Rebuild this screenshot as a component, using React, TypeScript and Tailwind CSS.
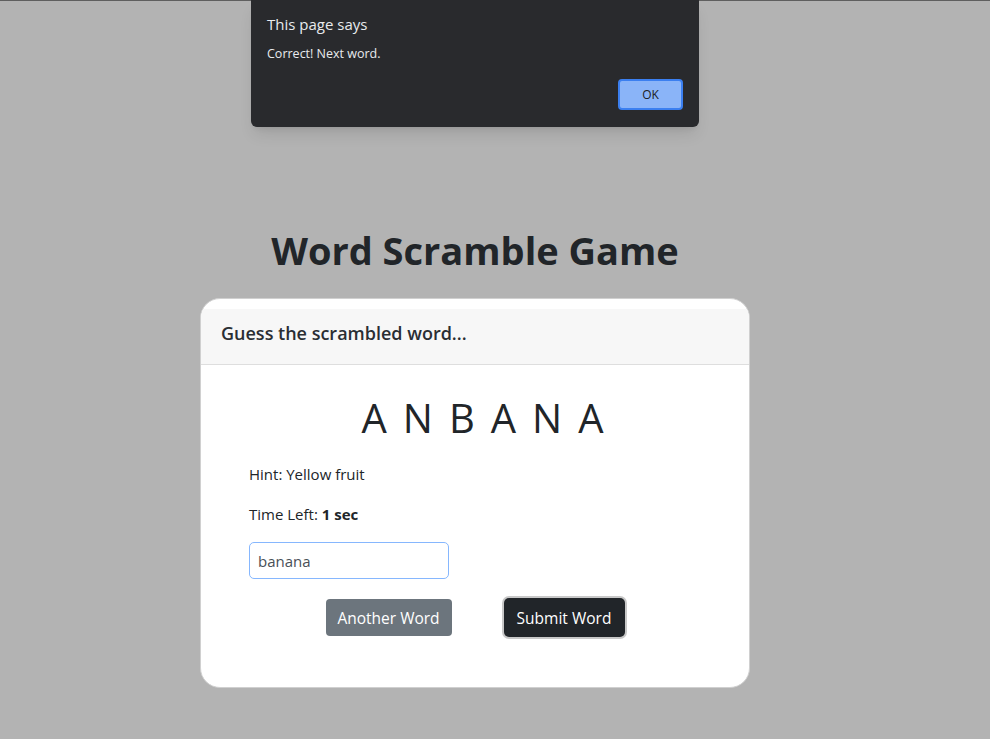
import React from "react";

export default function App() {
  return (
    <div className="relative min-h-[739px] w-full bg-[#b3b3b3] font-['Open_Sans',sans-serif] text-[#212529]">
      {/* top edge line */}
      <div className="h-px w-full bg-[#5f5f5f]" />

      {/* Browser alert dialog */}
      <div className="absolute left-[251px] top-0 w-[448px] h-[127px] rounded-b-md bg-[#292a2d] shadow-lg px-4 pt-[13px]">
        <p className="text-[15px] leading-[22px] text-[#e8eaed]">This page says</p>
        <p className="mt-[10px] text-[12.5px] leading-[18px] text-[#e8eaed]">Correct! Next word.</p>
        <div className="mt-[16px] flex justify-end">
          <button className="w-[65px] h-[31px] rounded-[4px] border-2 border-[#3b7ff0] bg-[#8ab4f8] text-[12px] text-[#202124]">
            OK
          </button>
        </div>
      </div>

      {/* Page */}
      <div className="flex flex-col items-center pt-[222px] pr-[40px]">
        <h1 className="text-[38px] font-bold leading-[54px]">Word Scramble Game</h1>
        <div className="mt-[21px] w-[550px] rounded-[20px] border border-[#d0d0d0] bg-white overflow-hidden">
          <div className="mt-[10px] h-[56px] flex items-center px-5 pb-[6px] bg-[#f7f7f7] border-b border-[#dedede]">
            <span className="text-[18px] font-semibold text-[#2a2e33]">Guess the scrambled word...</span>
          </div>
          <div className="px-12 pt-[26px] pb-[50px]">
            <p className="text-center text-[40px] font-medium tracking-[16px] leading-[54px] pl-[31px]">ANBANA</p>
            <p className="mt-[17px] text-[15px] leading-[24px]">Hint: Yellow fruit</p>
            <p className="mt-[16px] text-[15px] leading-[24px]">
              Time Left: <b>1 sec</b>
            </p>
            <input
              readOnly
              value="banana"
              className="mt-[16px] w-[200px] h-[37px] rounded-[5px] border border-[#86b7fe] px-2 text-[15px] text-[#495057] outline-none"
            />
            <div className="mt-[20px] flex justify-center gap-[52px]">
              <button className="h-[37px] w-[126px] pt-[2px] rounded-[4px] bg-[#6c757d] text-white text-[15.5px]">Another Word</button>
              <button className="h-[39px] w-[121px] pt-[2px] rounded-[5px] bg-[#212529] text-white text-[15.5px] ring-2 ring-[#c8c8c8] -mt-px">
                Submit Word
              </button>
            </div>
          </div>
        </div>
      </div>
    </div>
  );
}
